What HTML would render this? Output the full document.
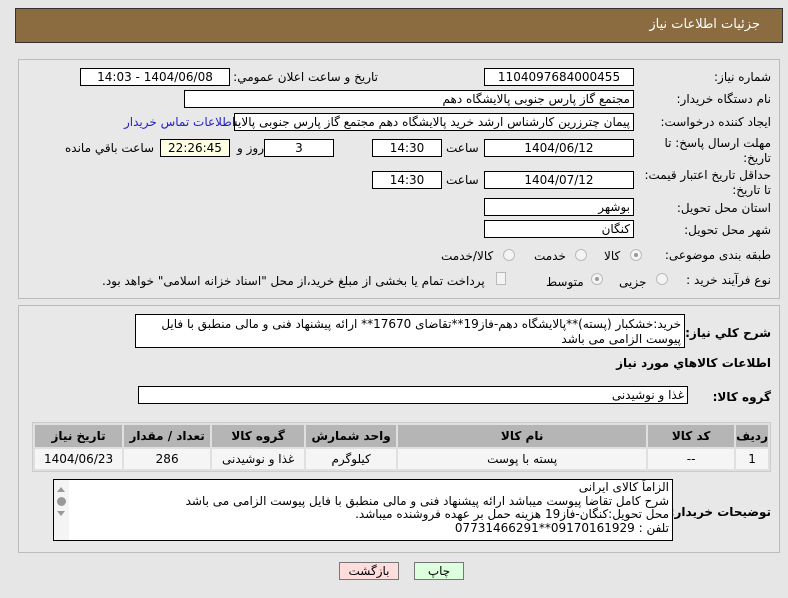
<!DOCTYPE html>
<html><head><meta charset="utf-8"><style>
*{box-sizing:border-box;margin:0;padding:0}
body{width:788px;height:598px;background:#e6e6e6;font-family:"DejaVu Sans","Liberation Sans",sans-serif;font-size:12px;color:#000;position:relative;overflow:hidden}
.a{position:absolute;white-space:nowrap}
.box{position:absolute;background:#fff;border:1px solid #000;direction:rtl;text-align:center;line-height:16px;font-size:12px;overflow:hidden;white-space:nowrap}
.r{text-align:right;padding-right:3px}
.lbl{position:absolute;direction:rtl;text-align:right;white-space:nowrap}
.rad{position:absolute;width:12px;height:12px;border-radius:50%;border:1px solid #bbb;background:#f4f4f4}
.rad.on::after{content:"";position:absolute;left:3px;top:3px;width:4px;height:4px;border-radius:50%;background:#999}
table{border-collapse:separate;border-spacing:2px;background:#e0e0e0;border:1px solid #ccc}
td,th{text-align:center;font-size:12px}
th{background:#b5b5b5;height:22px;font-weight:bold}
td{background:#f5f5f5;height:20px}
</style></head><body>
<div class="a" style="left:15px;top:8px;width:768px;height:35px;background:#8b6b40;border:1px solid #333"></div>
<div class="lbl" style="right:28px;top:17px;color:#fff;font-size:13px">جزئیات اطلاعات نیاز</div>

<div class="a" style="left:18px;top:59px;width:762px;height:240px;border:1px solid #bbb;background:#e8e8e8"></div>
<div class="a" style="left:18px;top:305px;width:762px;height:248px;border:1px solid #bbb;background:#e8e8e8"></div>

<div class="lbl" style="right:17px;top:70px">شماره نیاز:</div>
<div class="box" style="left:484px;top:68px;width:150px;height:18px">1104097684000455</div>
<div class="lbl" style="right:410px;top:70px">تاریخ و ساعت اعلان عمومي:</div>
<div class="box" style="left:80px;top:68px;width:150px;height:18px">1404/06/08 - 14:03</div>

<div class="lbl" style="right:17px;top:92px">نام دستگاه خریدار:</div>
<div class="box r" style="left:184px;top:90px;width:450px;height:18px">مجتمع گاز پارس جنوبی  پالایشگاه دهم</div>

<div class="lbl" style="right:17px;top:115px">ایجاد کننده درخواست:</div>
<div class="box r" style="left:234px;top:113px;width:400px;height:18px">پیمان چترزرین کارشناس ارشد خرید پالایشگاه دهم مجتمع گاز پارس جنوبی  پالایشگاه</div>
<div class="lbl" style="left:124px;top:115px;color:#2222cc">اطلاعات تماس خریدار</div>

<div class="lbl" style="right:17px;top:136px;line-height:15px">مهلت ارسال پاسخ: تا<br>تاریخ:</div>
<div class="box" style="left:484px;top:139px;width:150px;height:18px">1404/06/12</div>
<div class="lbl" style="left:446px;top:141px">ساعت</div>
<div class="box" style="left:372px;top:139px;width:70px;height:18px">14:30</div>
<div class="box" style="left:264px;top:139px;width:70px;height:18px">3</div>
<div class="lbl" style="left:237px;top:141px">روز و</div>
<div class="box" style="left:160px;top:139px;width:70px;height:18px;background:#ffffe6">22:26:45</div>
<div class="lbl" style="left:65px;top:141px">ساعت باقي مانده</div>

<div class="lbl" style="right:17px;top:168px;line-height:15px">حداقل تاریخ اعتبار قیمت:<br>تا تاریخ:</div>
<div class="box" style="left:484px;top:171px;width:150px;height:18px">1404/07/12</div>
<div class="lbl" style="left:446px;top:173px">ساعت</div>
<div class="box" style="left:372px;top:171px;width:70px;height:18px">14:30</div>

<div class="lbl" style="right:17px;top:201px">استان محل تحویل:</div>
<div class="box r" style="left:484px;top:198px;width:150px;height:18px">بوشهر</div>
<div class="lbl" style="right:17px;top:223px">شهر محل تحویل:</div>
<div class="box r" style="left:484px;top:220px;width:150px;height:18px">کنگان</div>

<div class="lbl" style="right:17px;top:248px">طبقه بندی موضوعی:</div>
<div class="rad on" style="left:630px;top:249px"></div>
<div class="lbl" style="left:604px;top:249px">کالا</div>
<div class="rad" style="left:575px;top:249px"></div>
<div class="lbl" style="left:534px;top:249px">خدمت</div>
<div class="rad" style="left:503px;top:249px"></div>
<div class="lbl" style="left:441px;top:249px">کالا/خدمت</div>

<div class="lbl" style="right:17px;top:273px">نوع فرآیند خرید :</div>
<div class="rad" style="left:656px;top:273px"></div>
<div class="lbl" style="left:619px;top:275px">جزیی</div>
<div class="rad on" style="left:591px;top:273px"></div>
<div class="lbl" style="left:546px;top:275px">متوسط</div>
<div class="a" style="left:496px;top:272px;width:10px;height:13px;border:1px solid #bbb;background:#f4f4f4"></div>
<div class="lbl" style="left:102px;top:274px">پرداخت تمام یا بخشی از مبلغ خرید،از محل "اسناد خزانه اسلامی" خواهد بود.</div>

<div class="lbl" style="right:17px;top:326px;font-weight:bold">شرح کلي نیاز:</div>
<div class="box r" style="left:135px;top:314px;width:550px;height:34px;text-align:right;line-height:15px;white-space:normal;padding:2px 3px">خرید:خشکبار (پسته)**پالایشگاه دهم-فاز19**تقاضای 17670** ارائه پیشنهاد فنی و مالی منطبق با فایل پیوست الزامی می باشد</div>

<div class="lbl" style="right:17px;top:356px;font-weight:bold">اطلاعات کالاهاي مورد نیاز</div>

<div class="lbl" style="right:17px;top:390px;font-weight:bold">گروه کالا:</div>
<div class="box r" style="left:138px;top:386px;width:550px;height:18px">غذا و نوشیدنی</div>

<table class="a" style="left:32px;top:422px;width:739px;direction:rtl">
<tr><th style="width:30px">ردیف</th><th style="width:86px">کد کالا</th><th style="width:248px">نام کالا</th><th style="width:90px">واحد شمارش</th><th style="width:92px">گروه کالا</th><th style="width:86px">تعداد / مقدار</th><th>تاریخ نیاز</th></tr>
<tr><td>1</td><td>--</td><td>پسته با پوست</td><td>کیلوگرم</td><td>غذا و نوشیدنی</td><td>286</td><td>1404/06/23</td></tr>
</table>

<div class="lbl" style="right:17px;top:505px;font-weight:bold">توضیحات خریدار:</div>
<div class="box" style="left:53px;top:479px;width:620px;height:62px;text-align:right;line-height:13.5px;padding:1px 3px;white-space:nowrap">الزاماً کالای ایرانی<br>شرح کامل تقاضا پیوست میباشد ارائه پیشنهاد فنی و مالی منطبق با فایل پیوست الزامی می باشد<br>محل تحویل:کنگان-فاز19 هزینه حمل بر عهده فروشنده میباشد.<br>تلفن : 09170161929**07731466291</div>
<div class="a" style="left:54px;top:480px;width:15px;height:60px;background:#f4f4f4"></div>
<div class="a" style="left:57px;top:487px;width:0;height:0;border-left:4px solid transparent;border-right:4px solid transparent;border-bottom:5px solid #999"></div>
<div class="a" style="left:57px;top:497px;width:9px;height:9px;border-radius:50%;background:#999"></div>
<div class="a" style="left:57px;top:511px;width:0;height:0;border-left:4px solid transparent;border-right:4px solid transparent;border-top:5px solid #999"></div>

<div class="box" style="left:339px;top:562px;width:60px;height:18px;background:#fdd;border-color:#777">بازگشت</div>
<div class="box" style="left:414px;top:562px;width:50px;height:18px;background:#dfd;border-color:#777">چاپ</div>
</body></html>
